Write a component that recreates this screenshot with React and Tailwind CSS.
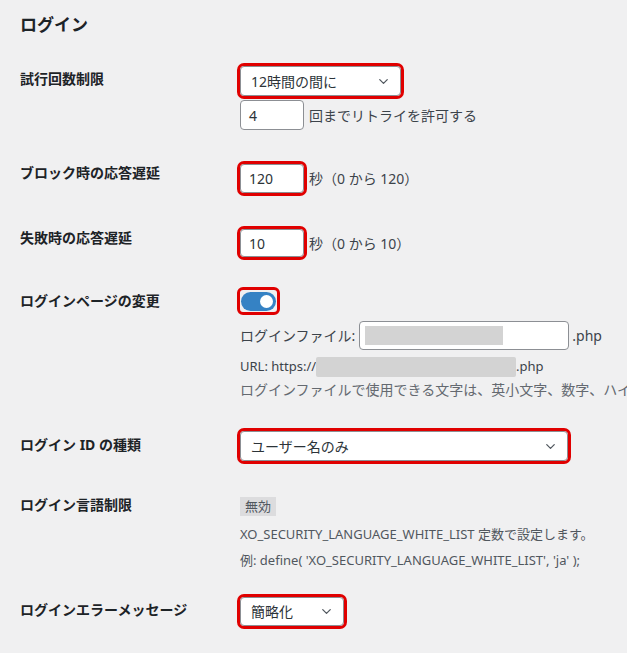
import { ChevronDown } from 'lucide-react';

const font = "font-['Noto_Sans','Noto_Sans_CJK_JP',sans-serif]";

function Select({ value, width, className = '' }) {
  return (
    <div
      className={`flex items-center justify-between bg-white border border-[#8c8f94] rounded-[4px] pl-[10px] pr-[9px] text-[14px] text-[#2c3338] outline-3 outline-[#e00000] ${className}`}
      style={{ width }}
    >
      <span>{value}</span>
      <ChevronDown size={15} strokeWidth={2} className="text-[#50575e]" />
    </div>
  );
}

function NumberInput({ value, red, className = '' }) {
  return (
    <div
      className={`flex items-center w-[64px] bg-white border border-[#8c8f94] rounded-[4px] px-[8px] text-[14px] text-[#2c3338] ${red ? 'outline-3 outline-[#e00000]' : ''} ${className}`}
    >
      {value}
    </div>
  );
}

function Row({ label, children, className = '' }) {
  return (
    <div className={`flex ${className}`}>
      <div className="w-[220px] shrink-0 pt-5 leading-[18px] text-[14px] font-bold text-[#1d2327]">
        {label}
      </div>
      <div className="flex-1 min-w-0">{children}</div>
    </div>
  );
}

export default function App() {
  return (
    <div className={`w-[627px] h-[653px] overflow-hidden bg-[#f0f0f1] pl-5 text-[#3c434a] ${font}`}>
      <h2 className="pt-[14px] leading-[22px] text-[17px] font-bold text-[#1d2327] mb-[14px]">
        ログイン
      </h2>

      <Row label="試行回数制限" className="h-[94px]">
        <Select value="12時間の間に" width="161px" className="mt-4 h-[30px]" />
        <div className="flex items-center mt-1 gap-[5px]">
          <NumberInput value="4" className="h-[30px]" />
          <span className="text-[14px] text-[#3c434a]">回までリトライを許可する</span>
        </div>
      </Row>

      <Row label="ブロック時の応答遅延" className="h-[65px]">
        <div className="flex items-center mt-5 gap-[5px]">
          <NumberInput value="120" red className="h-[29px]" />
          <span className="text-[14px]">秒（0 から 120）</span>
        </div>
      </Row>

      <Row label="失敗時の応答遅延" className="h-[63px]">
        <div className="flex items-center mt-5 gap-[5px]">
          <NumberInput value="10" red className="h-[28px]" />
          <span className="text-[14px]">秒（0 から 10）</span>
        </div>
      </Row>

      <Row label="ログインページの変更" className="h-[144px]">
        {/* toggle with the red annotation box round it */}
        <div className="mt-[18px] w-[37px] h-[22px] p-[1px] rounded-[3px] outline-3 outline-[#e00000] flex items-center">
          <div className="w-[35px] h-[19px] rounded-full bg-[#3582c4] flex items-center justify-end pr-[3px]">
            <div className="w-[13px] h-[13px] rounded-full bg-white" />
          </div>
        </div>
        <div className="flex items-center mt-[9px] h-[29px] text-[14px] whitespace-nowrap">
          <span>ログインファイル:</span>
          <div className="ml-[4px] w-[210px] h-[29px] bg-white border border-[#8c8f94] rounded-[4px] flex items-center pl-[5px]">
            <div className="w-[138px] h-[19px] bg-[#d3d3d3]" />
          </div>
          <span className="ml-[3px]">.php</span>
        </div>
        <div className="flex items-center mt-[6px] h-[21px] text-[13px] whitespace-nowrap">
          <span>URL: https://</span>
          <div className="w-[200px] h-[20px] bg-[#d3d3d3] rounded-[2px]" />
          <span>.php</span>
        </div>
        <div className="h-[25px] leading-[25px] text-[14px] text-[#646970] whitespace-nowrap">
          ログインファイルで使用できる文字は、英小文字、数字、ハイ
        </div>
      </Row>

      <Row label="ログイン ID の種類" className="h-[60px]">
        <Select value="ユーザー名のみ" width="328px" className="mt-[15px] h-[30px]" />
      </Row>

      <Row label="ログイン言語制限" className="h-[105px]">
        <div className="mt-[21px] inline-flex items-center h-[19px] px-[5px] bg-[#dcdcde] text-[13px] text-[#50575e]">
          無効
        </div>
        <div className="mt-[4px] h-[26px] leading-[26px] text-[13px] text-[#50575e] whitespace-nowrap">
          XO_SECURITY_LANGUAGE_WHITE_LIST 定数で設定します。
        </div>
        <div className="h-[26px] leading-[26px] text-[13px] text-[#50575e] whitespace-nowrap">
          例: define( 'XO_SECURITY_LANGUAGE_WHITE_LIST', 'ja' );
        </div>
      </Row>

      <Row label="ログインエラーメッセージ" className="h-[72px]">
        <Select value="簡略化" width="104px" className="mt-4 h-[29px]" />
      </Row>
    </div>
  );
}
